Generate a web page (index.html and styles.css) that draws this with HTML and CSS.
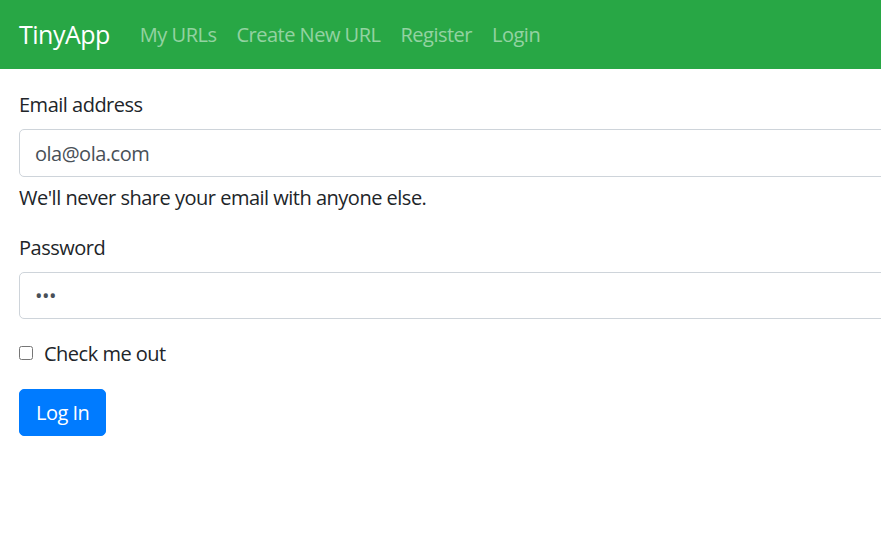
FILE: index.html
```html
<!DOCTYPE html>
<html lang="en">
<head>
<meta charset="utf-8">
<title>TinyApp</title>
<link rel="stylesheet" href="styles.css">
</head>
<body>
<nav class="navbar">
  <a class="brand" href="#">TinyApp</a>
  <ul class="nav">
    <li><a class="nav-link" href="#">My URLs</a></li>
    <li><a class="nav-link" href="#">Create New URL</a></li>
    <li><a class="nav-link" href="#">Register</a></li>
    <li><a class="nav-link" href="#">Login</a></li>
  </ul>
</nav>
<main class="content">
  <form class="form">
    <div class="form-group">
      <label class="label" for="email">Email address</label>
      <input class="control" id="email" type="email" value="ola@ola.com">
      <div class="help">We'll never share your email with anyone else.</div>
    </div>
    <div class="form-group">
      <label class="label" for="pw">Password</label>
      <input class="control control-pw" id="pw" type="password" value="abc">
    </div>
    <div class="form-group check">
      <input class="check-input" id="chk" type="checkbox">
      <label class="check-label" for="chk">Check me out</label>
    </div>
    <button class="btn" type="button">Log In</button>
  </form>
</main>
</body>
</html>
```
FILE: styles.css
```css
html, body {
  margin: 0;
  padding: 0;
}
body {
  width: 881px;
  overflow: hidden;
  font-family: "Open Sans", "Noto Sans", sans-serif;
  font-size: 20px;
  line-height: 1.5;
  letter-spacing: -0.5px;
  color: #212529;
  background: #fff;
}
.navbar {
  display: flex;
  align-items: center;
  height: 69px;
  box-sizing: border-box;
  padding: 0 19px;
  background: #28a745;
}
.brand {
  color: #fff;
  text-decoration: none;
  font-size: 25px;
  margin-right: 20px;
  line-height: 1;
}
.nav {
  display: flex;
  list-style: none;
  margin: 0;
  padding: 0;
}
.nav-link {
  display: block;
  padding: 8px 10px;
  color: rgba(255, 255, 255, 0.5);
  text-decoration: none;
}
.content {
  padding: 21px 19px 0;
}
.form {
  width: 1200px;
}
.form-group {
  margin-bottom: 20px;
}
.label {
  display: block;
  margin-bottom: 9px;
}
.control {
  display: block;
  box-sizing: border-box;
  width: 100%;
  height: 48px;
  padding: 7px 15px;
  font: inherit;
  letter-spacing: inherit;
  color: #495057;
  background: #fff;
  border: 1px solid #ced4da;
  border-radius: 5px;
}
.control-pw {
  height: 47px;
}
.help {
  margin-top: 6px;
}
.check {
  display: flex;
  align-items: center;
}
.check-input {
  width: 14px;
  height: 14px;
  margin: -2px 11px 0 0;
}
.btn {
  font: inherit;
  letter-spacing: inherit;
  color: #fff;
  background: #007bff;
  border: 1px solid #007bff;
  border-radius: 5px;
  padding: 0 16px;
  height: 47px;
  cursor: pointer;
}
```
